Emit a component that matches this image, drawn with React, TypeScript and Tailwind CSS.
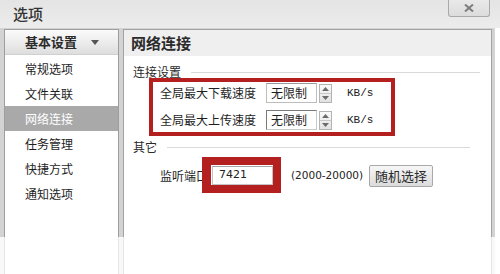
import React from "react";

const cjk = { fontFamily: '"Noto Sans CJK SC", "Noto Sans", sans-serif' };

const menu = ["常规选项", "文件关联", "网络连接", "任务管理", "快捷方式", "通知选项"];

const Spinner = () => (
  <div className="ml-[2px] flex h-[19px] w-[13px] flex-col border border-[#b3b3b3] bg-gradient-to-b from-[#fafafa] to-[#e2e2e2]">
    <div className="flex flex-1 items-center justify-center border-b border-[#c8c8c8]">
      <svg width="7" height="4" viewBox="0 0 7 4">
        <path d="M0 4 L3.5 0 L7 4 Z" fill="#6b6b6b" />
      </svg>
    </div>
    <div className="flex flex-1 items-center justify-center">
      <svg width="7" height="4" viewBox="0 0 7 4">
        <path d="M0 0 L3.5 4 L7 0 Z" fill="#6b6b6b" />
      </svg>
    </div>
  </div>
);

const SpeedRow = ({ label, focused }: { label: string; focused?: boolean }) => (
  <div className="flex h-[20px] items-center">
    <span className="w-[96px] text-[12px] leading-[12px] text-[#1e1e1e]">{label}</span>
    <div
      className={`ml-[10px] flex h-[20px] w-[51px] items-center border bg-white pl-[4px] text-[12px] text-[#1e1e1e] ${
        focused ? "border-[#7a7a7a] border-r-[#c9c9c9] border-b-[#c9c9c9]" : "border-[#bdbdbd] border-t-[#9a9a9a]"
      }`}
    >
      无限制
    </div>
    <Spinner />
    <span className="ml-[15px] text-[11px] text-[#222]" style={{ fontFamily: '"Liberation Mono", monospace' }}>
      KB/s
    </span>
  </div>
);

const SectionTitle = ({ text, lineMr }: { text: string; lineMr: string }) => (
  <div className="flex h-[12px] items-center pl-[9px]">
    <span className="text-[12px] leading-[12px] text-[#2a2a2a]">{text}</span>
    <div className={`ml-[10px] flex-1 border-t border-[#d9d9d9] border-b-white ${lineMr}`} />
  </div>
);

export default function App() {
  return (
    <div className="relative h-[274px] w-[500px] overflow-hidden bg-white" style={cjk}>
      {/* title bar */}
      <div className="flex h-[28px] w-[500px] items-start justify-between bg-gradient-to-b from-[#e4e4e4] to-[#ececec]">
        <span className="mt-[5px] ml-[13px] text-[15px] font-medium leading-[18px] text-[#333]">选项</span>
        <div className="mr-[10px] flex h-[17px] w-[42px] items-center justify-center rounded-b-[3px] border border-t-0 border-[#a9a9a9] bg-gradient-to-b from-[#e9e9e9] to-[#dcdcdc]">
          <svg width="10" height="8" viewBox="0 0 10 8">
            <path d="M1 0.5 L9 7.5 M9 0.5 L1 7.5" stroke="#7d7d7d" strokeWidth="2" />
          </svg>
        </div>
      </div>

      {/* body */}
      <div className="flex h-[209px] w-[495px] bg-[#d3d3d3] pt-[1px] pl-[4px] pr-[3px]">
        {/* left menu */}
        <div className="w-[115px] border border-b-0 border-[#9e9e9e] bg-white">
          <div className="flex h-[25px] items-center border-b border-[#d0d0d0] bg-gradient-to-b from-[#fbfbfb] to-[#dedede] pl-[20px]">
            <span className="text-[13px] font-bold text-[#2b2b2b]">基本设置</span>
            <svg className="ml-[14px]" width="8" height="5" viewBox="0 0 8 5">
              <path d="M0 0 L8 0 L4 5 Z" fill="#555" />
            </svg>
          </div>
          <div className="mt-[1px]">
            {menu.map((m) => (
              <div
                key={m}
                className={`flex h-[25px] items-center pl-[20px] text-[12px] ${
                  m === "网络连接" ? "bg-[#a9a9a9] text-white" : "text-[#1e1e1e]"
                }`}
              >
                {m}
              </div>
            ))}
          </div>
        </div>

        {/* right pane */}
        <div className="ml-[4px] flex-1 border border-b-0 border-[#a3a3a3] bg-white">
          <div className="flex h-[26px] items-center bg-[#efefef] pl-[7px]">
            <span className="text-[15px] font-bold text-[#2b2b2b]">网络连接</span>
          </div>

          <div className="mt-[10px]">
            <SectionTitle text="连接设置" lineMr="mr-[11px]" />
          </div>

          <div className="ml-[25px] w-[246px] border-[4px] border-[#b3201f] pt-[1px] pb-[2px] pl-[7px]">
            <SpeedRow label="全局最大下载速度" />
            <div className="mt-[7px]">
              <SpeedRow label="全局最大上传速度" focused />
            </div>
          </div>

          <div className="mt-[5px]">
            <SectionTitle text="其它" lineMr="mr-[21px]" />
          </div>

          <div className="mt-[13px] flex h-[19px] items-center pl-[36px]">
            <span className="w-[48px] text-[12px] leading-[12px] text-[#1e1e1e]">监听端口</span>
            <div className="relative ml-[4px]">
              <div
                className="flex h-[19px] w-[61px] items-center border border-[#c4c4c4] border-t-[#a5a5a5] bg-white pl-[6px] text-[11px] text-[#222]"
                style={{ fontFamily: '"DejaVu Sans", sans-serif' }}
              >
                7421
              </div>
              <div className="absolute -top-[9px] -right-[8px] -bottom-[8px] -left-[10px] border-[8px] border-l-[9px] border-[#b3201f]" />
            </div>
            <span
              className="ml-[18px] text-[10.5px] text-[#222]"
              style={{ fontFamily: '"DejaVu Sans", sans-serif' }}
            >
              (2000-20000)
            </span>
            <div className="ml-[6px] flex h-[22px] w-[64px] items-center justify-center rounded-[2px] border border-[#a8a8a8] bg-gradient-to-b from-[#f7f7f7] to-[#dcdcdc] text-[13px] text-[#2b2b2b]">
              随机选择
            </div>
          </div>
        </div>
      </div>

      {/* faded lower part */}
      <div className="flex h-[37px] w-[495px] bg-[#f8f8f8] pl-[4px] pr-[3px]">
        <div className="w-[115px] border-x border-[#e6e6e6] bg-white" />
        <div className="ml-[4px] flex-1 border-x border-[#e6e6e6] bg-white" />
      </div>
    </div>
  );
}
